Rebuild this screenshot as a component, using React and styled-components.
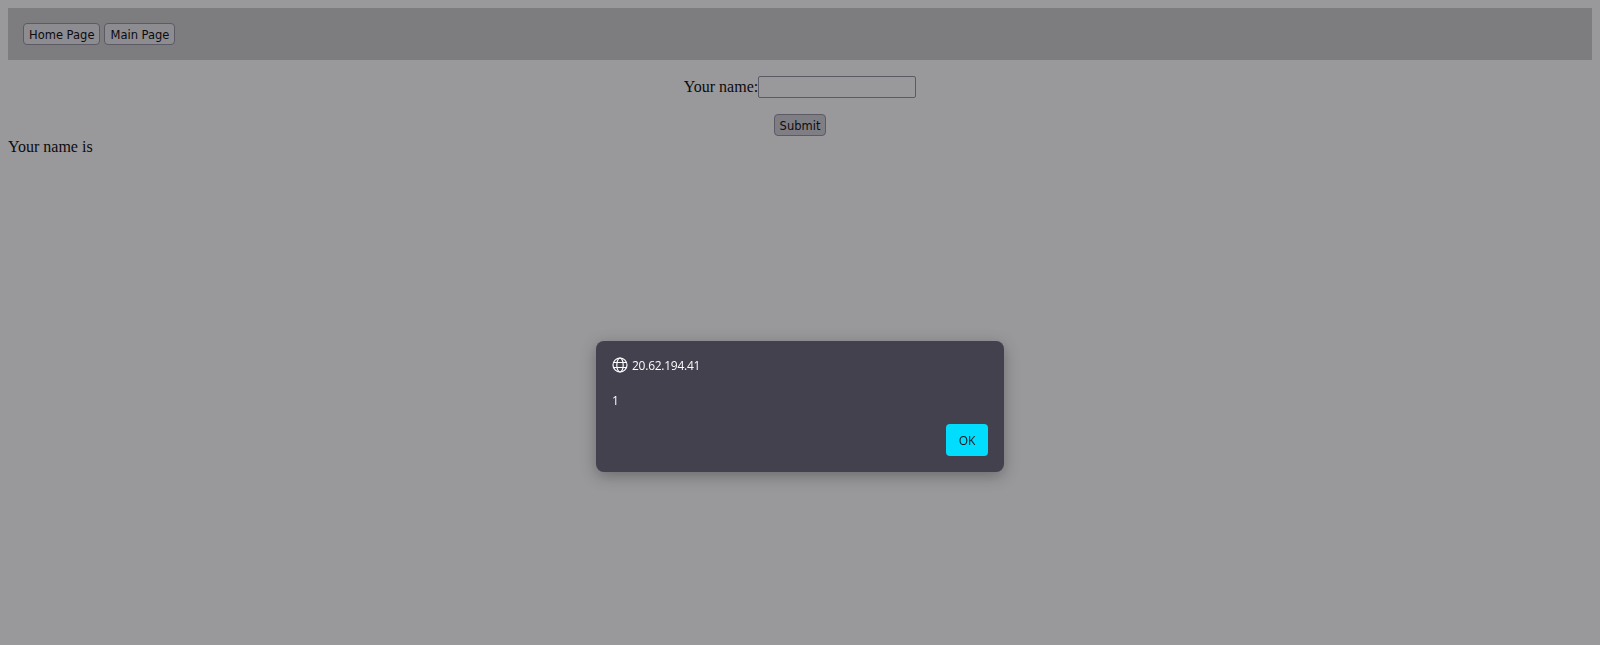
import React from "react"
import styled, { createGlobalStyle } from "styled-components"

const GlobalStyle = createGlobalStyle`
  body {
    margin: 8px;
    background-color: #fff;
    font-family: "Liberation Serif", serif;
    font-size: 16px;
    color: #000;
  }
`

const Nav = styled.nav`
  display: flex;
  gap: 4px;
  padding: 15px;
  background-color: #ccc;
`

const Button = styled.button`
  height: 22px;
  padding: 2px 5px 0;
  font-family: "DejaVu Sans", sans-serif;
  font-size: 11.5px;
  color: #000;
  background-color: ${props => (props.$hovered ? "#d0d0d7" : "#e9e9ed")};
  border: 1px solid #8f8f9d;
  border-radius: 4px;
`

const Form = styled.form`
  text-align: center;
`

const Field = styled.div`
  display: flex;
  justify-content: center;
  align-items: center;
  margin-top: 16px;
`

const SubmitRow = styled(Field)`
  padding-bottom: 2px;
`

const Input = styled.input`
  box-sizing: border-box;
  width: 158px;
  height: 22px;
  padding: 1px 2px;
  background-color: #fff;
  border: 1px solid #8f8f9d;
  border-radius: 2px;
`

const Result = styled.div`
  line-height: 18px;
`

const Overlay = styled.div`
  position: fixed;
  inset: 0;
  display: flex;
  justify-content: center;
  align-items: flex-start;
  padding-top: 341px;
  background-color: rgba(28, 27, 34, 0.45);
`

const Dialog = styled.div`
  display: flex;
  flex-direction: column;
  box-sizing: border-box;
  width: 408px;
  height: 131px;
  padding: 16px;
  background-color: #42414d;
  border-radius: 8px;
  box-shadow: 0 4px 16px rgba(0, 0, 0, 0.3);
  font-family: "Open Sans", sans-serif;
  color: #fbfbfe;
`

const Origin = styled.div`
  display: flex;
  align-items: center;
  gap: 4px;
  height: 16px;
  margin-bottom: 20px;
  font-size: 12px;
  font-weight: 500;
  letter-spacing: -0.25px;
`

const Message = styled.div`
  font-size: 12px;
  line-height: 16px;
`

const Actions = styled.div`
  display: flex;
  justify-content: flex-end;
  margin-top: auto;
`

const OkButton = styled.button`
  width: 42px;
  height: 32px;
  padding: 0;
  font-family: "Open Sans", sans-serif;
  font-size: 12px;
  color: #15141a;
  background-color: #00ddff;
  border: none;
  border-radius: 4px;
`

const Globe = () => (
  <svg width="16" height="16" viewBox="0 0 16 16" fill="none" stroke="#fbfbfe" strokeWidth="1.2">
    <circle cx="8" cy="8" r="7" />
    <ellipse cx="8" cy="8" rx="3.2" ry="7" />
    <path d="M1.6 5.5h12.8M1.6 10.5h12.8" />
  </svg>
)

const App = () => (
  <>
    <GlobalStyle />
    <Nav>
      <Button>Home Page</Button>
      <Button>Main Page</Button>
    </Nav>
    <Form>
      <Field>
        Your name:
        <Input type="text" />
      </Field>
      <SubmitRow>
        <Button type="button" $hovered>Submit</Button>
      </SubmitRow>
    </Form>
    <Result>Your name is</Result>
    <Overlay>
      <Dialog>
        <Origin>
          <Globe />
          20.62.194.41
        </Origin>
        <Message>1</Message>
        <Actions>
          <OkButton>OK</OkButton>
        </Actions>
      </Dialog>
    </Overlay>
  </>
)

export default App
